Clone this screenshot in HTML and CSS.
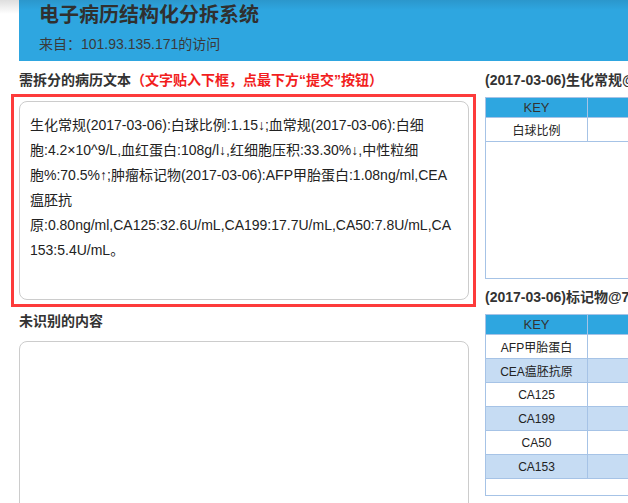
FILE: index.html
```html
<!DOCTYPE html>
<html lang="zh">
<head>
<meta charset="utf-8">
<title>电子病历结构化分拆系统</title>
<link rel="stylesheet" href="styles.css">
</head>
<body>
<div class="page">
  <header class="header">
    <h1 class="title">电子病历结构化分拆系统</h1>
    <div class="sub">来自：101.93.135.171的访问</div>
  </header>
  <div class="main">
    <div class="left">
      <div class="label">需拆分的病历文本<span class="hint">（文字贴入下框，点最下方“提交”按钮）</span></div>
      <div class="redbox">
        <div class="area">生化常规(2017-03-06):白球比例:1.15↓;血常规(2017-03-06):白细<br>胞:4.2×10^9/L,血红蛋白:108g/l↓,红细胞压积:33.30%↓,中性粒细<br>胞%:70.5%↑;肿瘤标记物(2017-03-06):AFP甲胎蛋白:1.08ng/ml,CEA<br>瘟胚抗<br>原:0.80ng/ml,CA125:32.6U/mL,CA199:17.7U/mL,CA50:7.8U/mL,CA<br>153:5.4U/mL。</div>
      </div>
      <div class="label label2">未识别的内容</div>
      <div class="area area2"></div>
    </div>
    <div class="right">
      <div class="rhead">(2017-03-06)生化常规@71</div>
      <div class="tbox">
        <table class="tbl">
          <tr><th class="kcol">KEY</th><th>VALUE</th></tr>
          <tr><td>白球比例</td><td>1.15↓</td></tr>
        </table>
      </div>
      <div class="rhead rhead2">(2017-03-06)标记物@71</div>
      <div class="tbox">
        <table class="tbl">
          <tr><th class="kcol">KEY</th><th>VALUE</th></tr>
          <tr><td>AFP甲胎蛋白</td><td>1.08ng/ml</td></tr>
          <tr class="alt"><td>CEA瘟胚抗原</td><td>0.80ng/ml</td></tr>
          <tr><td>CA125</td><td>32.6U/mL</td></tr>
          <tr class="alt"><td>CA199</td><td>17.7U/mL</td></tr>
          <tr><td>CA50</td><td>7.8U/mL</td></tr>
          <tr class="alt"><td>CA153</td><td>5.4U/mL</td></tr>
        </table>
      </div>
    </div>
  </div>
</div>
</body>
</html>
```

FILE: styles.css
```css
html, body {
  margin: 0;
  padding: 0;
  overflow: hidden;
}
body {
  background: linear-gradient(#dedede, #ffffff 14px) no-repeat;
  font-family: "Liberation Sans", "Noto Sans CJK SC", sans-serif;
  color: #333;
}
.page {
  width: 1000px;
}
.header {
  margin-left: 19px;
  height: 61px;
  box-sizing: border-box;
  padding: 4px 20px 0;
  background: linear-gradient(#2b97cc, #2ea6e0 10px, #2ea6e0);
}
.title {
  margin: 0;
  font-size: 20px;
  line-height: 22px;
  font-weight: bold;
  color: #303030;
}
.sub {
  margin-top: 8px;
  font-size: 14px;
  line-height: 20px;
  color: #3a3a3a;
}
.main {
  display: flex;
  padding-left: 11px;
}
.left {
  width: 465px;
  flex: none;
}
.label {
  margin-top: 9px;
  padding-left: 8px;
  font-size: 14px;
  line-height: 20px;
  font-weight: bold;
  color: #333;
}
.hint {
  color: #f21e1e;
}
.redbox {
  margin-top: 4px;
  border: 3px solid #fd3b3b;
  padding: 4px 4px 4px 5px;
}
.area {
  box-sizing: border-box;
  width: 450px;
  height: 199px;
  border: 1px solid #cccccc;
  border-radius: 8px;
  background: #fff;
  padding: 11px 10px;
  font-size: 14px;
  line-height: 25px;
  color: #222;
}
.label2 {
  margin-top: 4px;
}
.area2 {
  margin-top: 10px;
  margin-left: 8px;
  height: 220px;
}
.right {
  margin-left: 9px;
  flex: none;
  width: 500px;
}
.rhead {
  margin-top: 9px;
  font-size: 14px;
  line-height: 20px;
  font-weight: bold;
  color: #333;
  white-space: nowrap;
}
.rhead2 {
  margin-top: 8px;
}
.tbox {
  margin-top: 7px;
  width: 400px;
  height: 180px;
  border: 1px solid #a6c3e6;
  background: #fff;
}
.tbl {
  border-collapse: collapse;
  width: 100%;
  font-size: 12px;
}
.tbl th {
  background: #2ea6e0;
  font-weight: normal;
  font-size: 13px;
  color: #333;
  height: 19px;
  padding: 0;
  border-right: 1px solid #a6c3e6;
  border-bottom: 1px solid #a6c3e6;
}
.tbl td {
  height: 23px;
  padding: 0;
  text-align: center;
  color: #222;
  border-right: 1px solid #a6c3e6;
  border-bottom: 1px solid #a6c3e6;
}
.tbl td + td {
  color: transparent;
}
.kcol {
  width: 101px;
}
.alt td {
  background: #c6dcf3;
}
```
